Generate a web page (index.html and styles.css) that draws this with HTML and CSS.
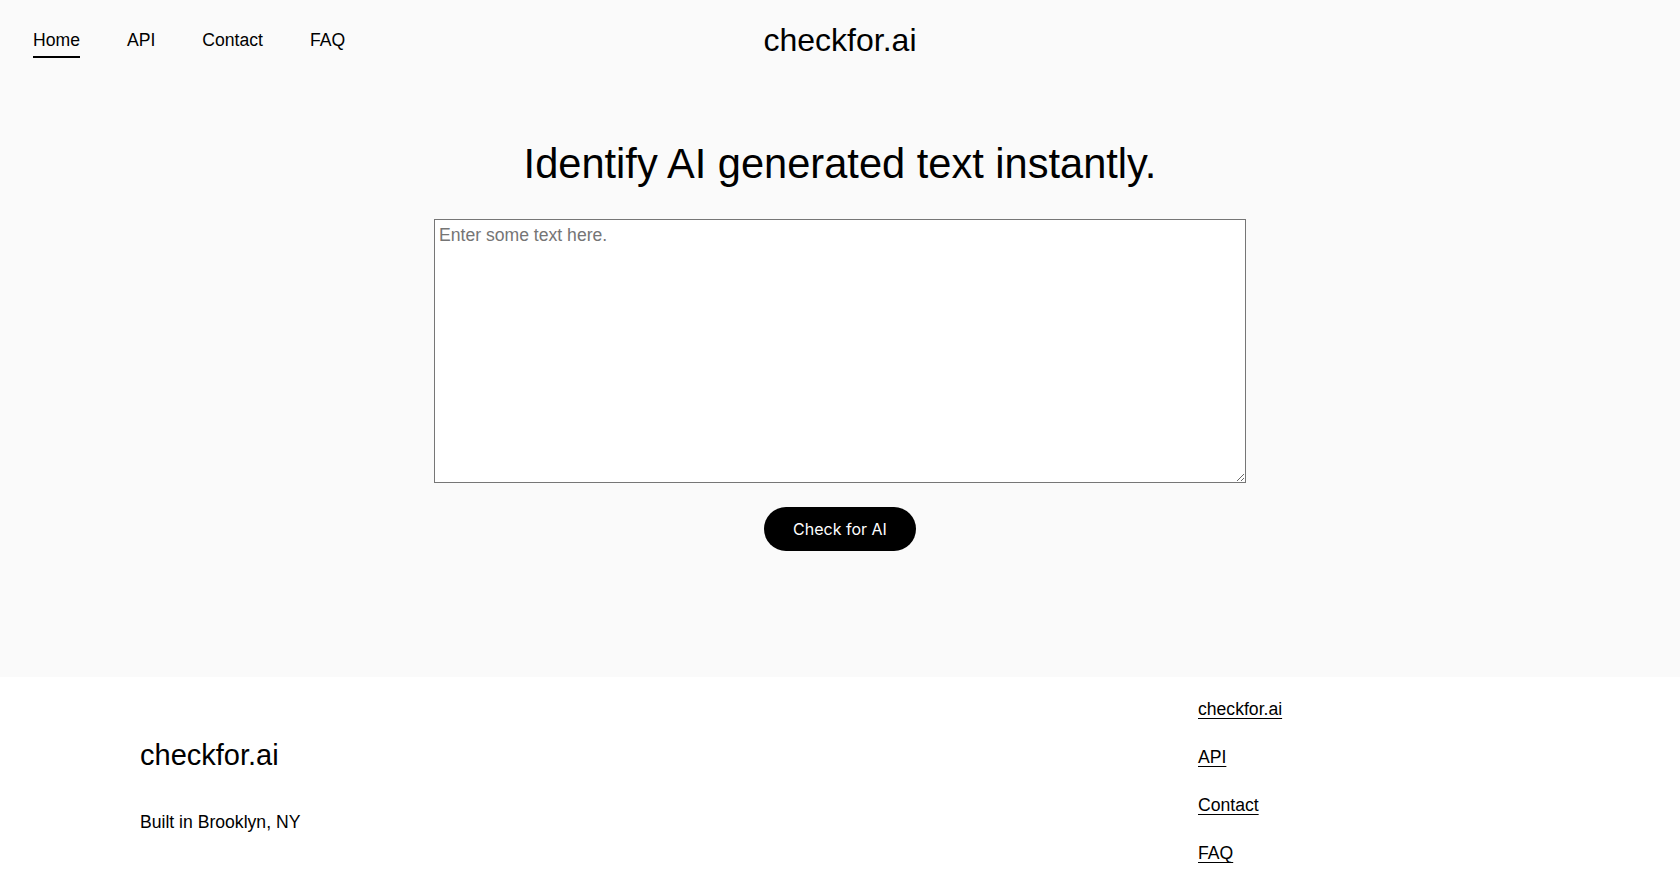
FILE: index.html
```html
<!DOCTYPE html>
<html lang="en">
<head>
<meta charset="utf-8">
<title>checkfor.ai</title>
<link rel="stylesheet" href="styles.css">
</head>
<body>
<div class="top">
  <header class="header">
    <nav class="nav">
      <a class="nav-link active" href="#">Home</a>
      <a class="nav-link" href="#">API</a>
      <a class="nav-link" href="#">Contact</a>
      <a class="nav-link" href="#">FAQ</a>
    </nav>
    <div class="brand">checkfor.ai</div>
    <div class="spacer"></div>
  </header>
  <main class="hero">
    <h1 class="hero-title">Identify AI generated text instantly.</h1>
    <textarea class="input" placeholder="Enter some text here."></textarea>
    <button class="check-btn" type="button">Check for AI</button>
  </main>
</div>
<footer class="footer">
  <div class="footer-left">
    <div class="footer-brand">checkfor.ai</div>
    <div class="footer-note">Built in Brooklyn, NY</div>
  </div>
  <div class="footer-links">
    <a href="#">checkfor.ai</a>
    <a href="#">API</a>
    <a href="#">Contact</a>
    <a href="#">FAQ</a>
  </div>
</footer>
</body>
</html>
```

FILE: styles.css
```css
html, body {
  margin: 0;
  padding: 0;
}
body {
  font-family: "Liberation Sans", Arial, sans-serif;
  color: #000;
  background: #fff;
}
.top {
  background: #fafafa;
}
.header {
  height: 80px;
  display: grid;
  grid-template-columns: 1fr auto 1fr;
  align-items: center;
  padding: 0 33px;
}
.nav {
  display: flex;
  gap: 47px;
  align-items: center;
}
.nav-link {
  font-size: 17.6px;
  line-height: 1.15;
  color: #000;
  text-decoration: none;
  padding: 6px 0 5px;
  border-bottom: 2px solid transparent;
  margin-top: 2px;
}
.nav-link.active {
  border-bottom-color: #000;
}
.brand {
  font-size: 32px;
  line-height: 1.15;
  text-align: center;
}
.hero {
  display: flex;
  flex-direction: column;
  align-items: center;
  padding: 60px 0 126px;
}
.hero-title {
  margin: 0;
  font-size: 41.6px;
  font-weight: 400;
  line-height: 1.15;
}
.input {
  box-sizing: border-box;
  width: 812px;
  height: 264px;
  margin-top: 31px;
  padding: 5px 4px 4px;
  border: 1px solid #767676;
  background: #fff;
  font-family: "Liberation Sans", Arial, sans-serif;
  font-size: 17.6px;
  color: #000;
  outline: none;
}
.input::placeholder {
  color: #757575;
}
.check-btn {
  margin-top: 24px;
  height: 44px;
  padding: 0 29px;
  border: none;
  border-radius: 22px;
  background: #000;
  color: #fff;
  font-family: Inter, "Liberation Sans", sans-serif;
  font-size: 16px;
  cursor: pointer;
}
.footer {
  display: grid;
  grid-template-columns: 1fr 342px;
  padding: 22px 140px 40px;
  background: #fff;
}
.footer-left {
  padding-top: 40px;
}
.footer-brand {
  font-size: 29px;
  line-height: 1.15;
}
.footer-note {
  margin-top: 40px;
  font-size: 17.6px;
  line-height: 1.15;
}
.footer-links {
  display: flex;
  flex-direction: column;
  align-items: flex-start;
  gap: 28px;
}
.footer-links a {
  font-size: 17.6px;
  line-height: 1.15;
  color: #000;
  text-decoration: underline;
  text-underline-offset: 3px;
}
```
